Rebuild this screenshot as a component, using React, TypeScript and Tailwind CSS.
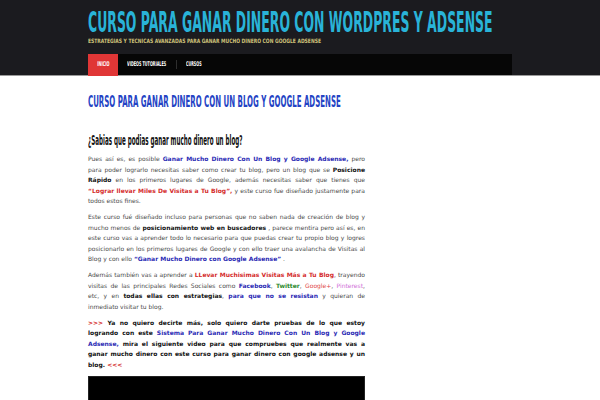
import type { ReactNode } from 'react';

const cond = { fontFamily: '"DejaVu Sans Condensed", "DejaVu Sans", sans-serif' };
const body = { fontFamily: '"DejaVu Sans", Verdana, sans-serif' };

const B = ({ children }: { children: ReactNode }) => (
  <strong className="font-bold text-[#111]">{children}</strong>
);
const Blue = ({ children }: { children: ReactNode }) => (
  <strong className="font-bold text-[#2a2ab4]">{children}</strong>
);
const Red = ({ children }: { children: ReactNode }) => (
  <strong className="font-bold text-[#d42c2c]">{children}</strong>
);

// each line is laid out on its own so the justified breaks match the page
const Para = ({ lines, className = '' }: { lines: ReactNode[]; className?: string }) => (
  <div className={`mb-[5.5px] ${className}`}>
    {lines.map((line, i) => (
      <div
        key={i}
        className={
          i < lines.length - 1
            ? 'whitespace-nowrap text-justify [text-align-last:justify]'
            : 'whitespace-nowrap'
        }
      >
        {line}
      </div>
    ))}
  </div>
);

export default function App() {
  return (
    <div className="min-h-[400px] bg-white">
      <header className="bg-[#1b1b1f] border-b border-[#9a9a9a]">
        <div className="mx-auto w-[424px]">
          <div className="pt-[10px] h-[54px]">
            <h1
              className="origin-left scale-x-[0.478] whitespace-nowrap text-[29px] font-bold leading-[25px] text-[#29b3d8]"
              style={cond}
            >
              CURSO PARA GANAR DINERO CON WORDPRES Y ADSENSE
            </h1>
            <p
              className="mt-[3px] origin-left scale-x-[0.83] whitespace-nowrap text-[6px] font-bold leading-[6px] text-[#cfc27a]"
              style={cond}
            >
              ESTRATEGIAS Y TECNICAS AVANZADAS PARA GANAR MUCHO DINERO CON GOOGLE ADSENSE
            </p>
          </div>
          <nav className="flex h-[21px] items-stretch bg-[#060606] text-[6.5px] font-bold text-white" style={cond}>
            <div className="-mb-[1px] flex w-[30px] items-center justify-center bg-[#e03636]">
              <span className="scale-x-[0.6] whitespace-nowrap">INICIO</span>
            </div>
            <div className="flex items-center pl-[9px]">
              <div className="w-[40px]">
                <span className="inline-block origin-left scale-x-[0.58] whitespace-nowrap">VIDEOS TUTORIALES</span>
              </div>
            </div>
            <div className="mx-[9px] my-[6px] w-px bg-[#2e2e2e]" />
            <div className="flex items-center">
              <div className="w-[20px]">
                <span className="inline-block origin-left scale-x-[0.58] whitespace-nowrap">CURSOS</span>
              </div>
            </div>
          </nav>
        </div>
      </header>

      <main className="mx-auto w-[424px]">
        <div className="w-[277px] pt-[19px]">
          <h2
            className="origin-left scale-x-[0.52] whitespace-nowrap text-[15px] font-bold leading-[15px] text-[#2443c4]"
            style={cond}
          >
            CURSO PARA GANAR DINERO CON UN BLOG Y GOOGLE ADSENSE
          </h2>
          <h3
            className="mt-[23px] origin-left scale-x-[0.443] whitespace-nowrap text-[14px] font-bold leading-[14px] text-[#111]"
            style={cond}
          >
            ¿Sabias que podias ganar mucho dinero un blog?
          </h3>

          <div className="mt-[7px] text-[6px] leading-[10.5px] text-[#4a4a4a]" style={body}>
            <Para
              lines={[
                <>Pues así es, es posible <Blue>Ganar Mucho Dinero Con Un Blog y Google Adsense,</Blue> pero</>,
                <>para poder lograrlo necesitas saber como crear tu blog, pero un blog que se <B>Posicione</B></>,
                <><B>Rápido</B> en los primeros lugares de Google, además necesitas saber que tienes que</>,
                <><Red>“Lograr llevar Miles De Visitas a Tu Blog”,</Red> y este curso fue diseñado justamente para</>,
                <>todos estos fines.</>,
              ]}
            />
            <Para
              lines={[
                <>Este curso fué diseñado incluso para personas que no saben nada de creación de blog y</>,
                <>mucho menos de <B>posicionamiento web en buscadores</B> , parece mentira pero así es, en</>,
                <>este curso vas a aprender todo lo necesario para que puedas crear tu propio blog y logres</>,
                <>posicionarlo en los primeros lugares de Google y con ello traer una avalancha de Visitas al</>,
                <>Blog y con ello <Blue>“Ganar Mucho Dinero con Google Adsense”</Blue> .</>,
              ]}
            />
            <Para
              lines={[
                <>Además también vas a aprender a <Red>LLevar Muchisimas Visitas Más a Tu Blog</Red>, trayendo</>,
                <>
                  visitas de las principales Redes Sociales como <Blue>Facebook</Blue>,{' '}
                  <strong className="font-bold text-[#2c8a2c]">Twitter</strong>,{' '}
                  <span className="text-[#e04848]">Google+</span>, <span className="text-[#d070d8]">Pinterest</span>,
                </>,
                <>etc, y en <B>todas ellas con estrategias</B>, <Blue>para que no se resistan</Blue> y quieran de</>,
                <>inmediato visitar tu blog.</>,
              ]}
            />
            <Para
              className="font-bold text-[#111]"
              lines={[
                <><span className="text-[#d42c2c]">&gt;&gt;&gt;</span> Ya no quiero decirte más, solo quiero darte pruebas de lo que estoy</>,
                <>logrando con este <Blue>Sistema Para Ganar Mucho Dinero Con Un Blog y Google</Blue></>,
                <><Blue>Adsense,</Blue> mira el siguiente video para que compruebes que realmente vas a</>,
                <>ganar mucho dinero con este curso para ganar dinero con google adsense y un</>,
                <>blog. <span className="text-[#d42c2c]">&lt;&lt;&lt;</span></>,
              ]}
            />
          </div>

          <div className="mt-[2px] h-[40px] border border-[#222] bg-black" />
        </div>
      </main>
    </div>
  );
}
